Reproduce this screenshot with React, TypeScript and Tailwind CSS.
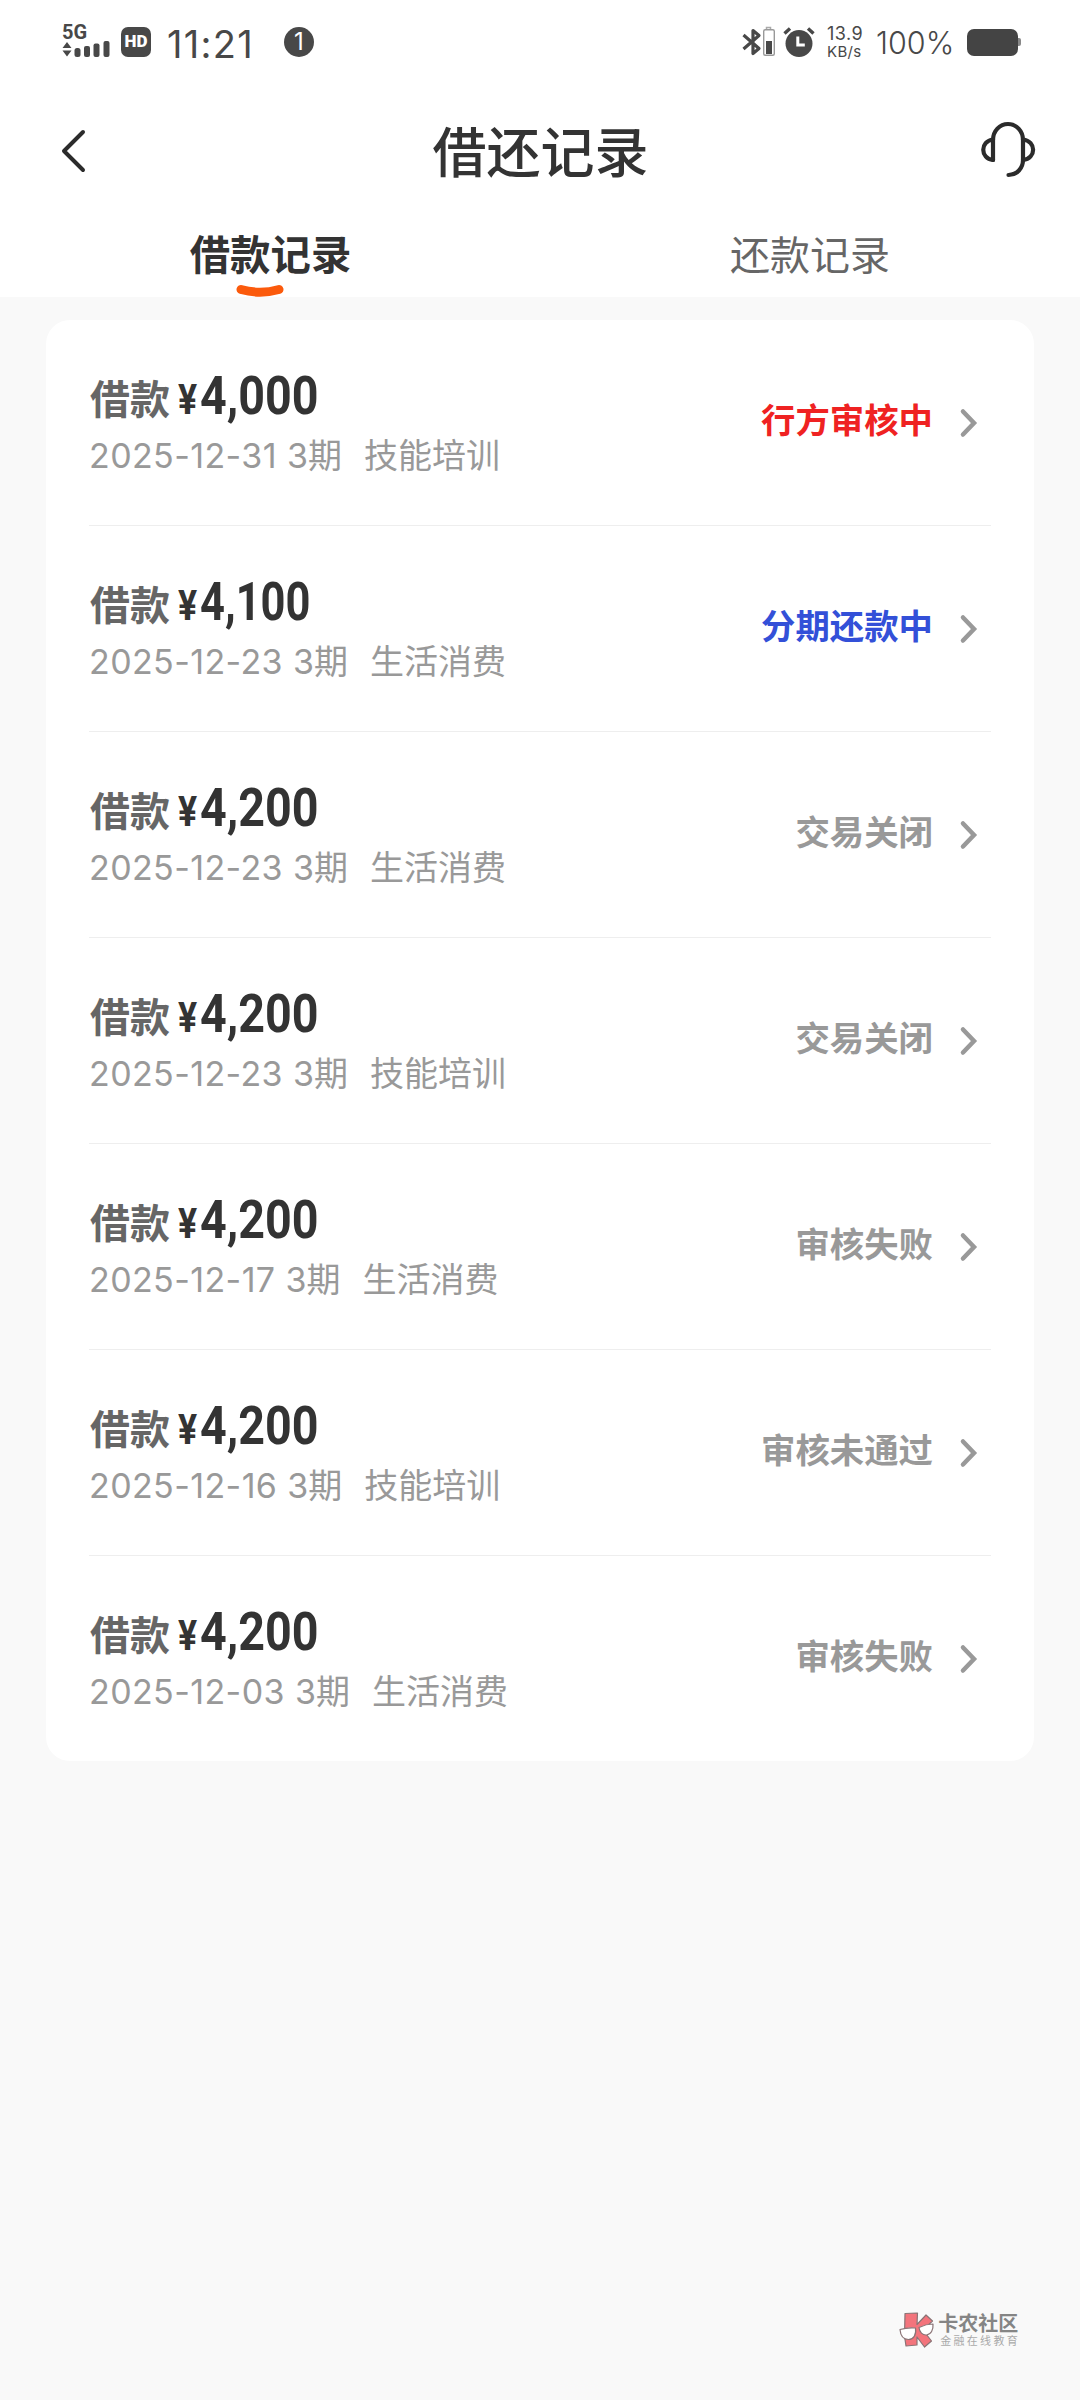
import { clsx } from "clsx";

type LoanRecord = {
  amount: string;
  date: string;
  usage: string;
  status: string;
  color: string;
};

const records: LoanRecord[] = [
  { amount: "4,000", date: "2025-12-31", usage: "技能培训", status: "行方审核中", color: "text-[#ef2222]" },
  { amount: "4,100", date: "2025-12-23", usage: "生活消费", status: "分期还款中", color: "text-[#3350d8]" },
  { amount: "4,200", date: "2025-12-23", usage: "生活消费", status: "交易关闭", color: "text-[#999999]" },
  { amount: "4,200", date: "2025-12-23", usage: "技能培训", status: "交易关闭", color: "text-[#999999]" },
  { amount: "4,200", date: "2025-12-17", usage: "生活消费", status: "审核失败", color: "text-[#999999]" },
  { amount: "4,200", date: "2025-12-16", usage: "技能培训", status: "审核未通过", color: "text-[#999999]" },
  { amount: "4,200", date: "2025-12-03", usage: "生活消费", status: "审核失败", color: "text-[#999999]" },
];

function SignalIcon() {
  return (
    <svg className="block" width="48" height="18" viewBox="0 0 48 18" fill="#484848">
      <path d="M0.5 7 5 1l4.500 6zM0.500 9.500h9L5 15.500z" />
      <rect x="12.500" y="7" width="6" height="9" rx="2.500" />
      <rect x="22" y="5" width="6" height="11" rx="2" />
      <rect x="31.500" y="2.500" width="6" height="13.500" rx="2" />
      <rect x="41.500" y="0" width="6" height="16" rx="2" />
    </svg>
  );
}

function BluetoothIcon() {
  return (
    <svg className="block" width="34" height="32" viewBox="0 0 34 32" fill="none">
      <path d="M1.500 9 17 22.500 11 27.500V4.500L17 9.500 1.500 23" stroke="#484848" strokeWidth="3.200" strokeLinejoin="round" />
      <path d="M24.500 3.500v-2h4v2" stroke="#aaa" strokeWidth="1.500" />
      <rect x="21.700" y="3.700" width="10.600" height="25.600" rx="1.500" stroke="#999" strokeWidth="1.400" />
      <rect x="24" y="15" width="6" height="13" fill="#484848" />
    </svg>
  );
}

function AlarmIcon() {
  return (
    <svg className="block" width="32" height="32" viewBox="0 0 32 32" fill="none">
      <circle cx="16" cy="17.500" r="13.500" fill="#484848" />
      <path d="M1.500 7.500 7 2.500M30.500 7.500 25 2.500" stroke="#484848" strokeWidth="3.400" />
      <path d="M14.800 10.500V19h7" stroke="#fff" strokeWidth="3" />
    </svg>
  );
}

function StatusBar() {
  return (
    <div className="flex h-[84px] items-center justify-between pr-[59px] pl-[62px] text-[#484848]">
      <div className="flex items-center">
        <div className="flex w-[48px] flex-col">
          <span className="h-[16px] font-['Roboto',sans-serif] text-[20px] leading-[14px] font-bold">5G</span>
          <SignalIcon />
        </div>
        <span className="ml-[11px] flex h-[30px] w-[30px] items-center justify-center rounded-[7px] bg-[#484848] font-['Roboto',sans-serif] text-[17px] font-black text-white">
          HD
        </span>
        <span className="mt-[3px] ml-[16px] w-[86px] font-['Inter',sans-serif] text-[38px] leading-none tracking-[1.300px] whitespace-nowrap">
          11:21
        </span>
        <span className="ml-[31px] flex h-[30px] w-[30px] items-center justify-center rounded-full bg-[#484848] font-['Inter',sans-serif] text-[24px] leading-none text-white">
          1
        </span>
      </div>
      <div className="flex items-center">
        <BluetoothIcon />
        <span className="ml-[7px]">
          <AlarmIcon />
        </span>
        <div className="mt-[2px] ml-[12px] flex w-[38px] flex-col font-['Inter',sans-serif] whitespace-nowrap">
          <span className="text-[18px] leading-[18px] tracking-[0.5px]">13.9</span>
          <span className="text-[15px] leading-[18px] tracking-[0.3px]">KB/s</span>
        </div>
        <span className="mt-[2px] ml-[11px] w-[79px] font-['Inter',sans-serif] text-[30.500px] leading-none font-light whitespace-nowrap">
          100%
        </span>
        <span className="ml-[12px] h-[27px] w-[51px] rounded-[7px] bg-[#444]" />
        <span className="h-[8px] w-[3px] rounded-r-[2px] bg-[#888]" />
      </div>
    </div>
  );
}

function NavBar() {
  return (
    <div className="flex h-[134px] items-center justify-between pr-[43px] pl-[60px]">
      <svg className="block" width="42" height="46" viewBox="0 0 42 46" fill="none" stroke="#2b2b2b" strokeWidth="4" strokeLinecap="round" strokeLinejoin="round">
        <path d="M23 4 4 23 23 42" />
      </svg>
      <h1 className="mt-[5px] text-[54px] leading-none font-medium text-[#333]">借还记录</h1>
      <svg className="mt-[-2px] block" width="58" height="58" viewBox="0 0 58 58" fill="none" stroke="#2b2b2b" strokeWidth="4.200" strokeLinecap="round" strokeLinejoin="round">
        <path d="M14 39V19a15 16 0 0 1 30 0v20c0 8-6 15-14.500 15" />
        <path d="M14 18.500C1 20 1 37.500 14 39M44 18.500c13.500 1.500 13.500 19 0 20.500" />
      </svg>
    </div>
  );
}

function Tabs() {
  return (
    <div className="flex h-[79px] text-[40px]">
      <div className="flex w-1/2 flex-col items-center pt-[16px]">
        <span className="pl-px text-[40.400px] leading-[44px] font-bold text-[#333]">借款记录</span>
        <svg className="mt-[6px] mr-[20px] block" width="48" height="13" viewBox="0 0 48 13" fill="none">
          <path d="M5 5.500c12 3.400 26 3.400 38 0" stroke="#fb5a0c" strokeWidth="9" strokeLinecap="round" />
        </svg>
      </div>
      <div className="flex w-1/2 flex-col items-center pt-[16px]">
        <span className="leading-[44px] text-[#666]">还款记录</span>
      </div>
    </div>
  );
}

function RecordRow({ record, last }: { record: LoanRecord; last: boolean }) {
  return (
    <li className={clsx("flex justify-between", last ? "h-[205px]" : "h-[206px] border-b border-[#eeeeee]")}>
      <div className="pt-[50px]">
        <div className="flex h-[53px] items-baseline whitespace-nowrap">
          <span className="w-[89px] pl-px text-[40px] leading-[52px] font-bold text-[#666]">借款</span>
          <span className="w-[22px] font-['Roboto',sans-serif] text-[42px] leading-[52px] font-bold text-[#333]">
            <span className="inline-block origin-left scale-x-85">¥</span>
          </span>
          <span
            className={clsx(
              "inline-block origin-left font-['Roboto',sans-serif] text-[53px] leading-[52px] font-bold text-[#333]",
              record.amount.includes("1") ? "scale-x-82" : "scale-x-88"
            )}
          >
            {record.amount}
          </span>
        </div>
        <div className="flex items-baseline text-[34px] leading-[65px] whitespace-nowrap text-[#999]">
          <span className="tracking-[0.4px]">{record.date}</span>
          <span className="ml-[10px]">3期</span>
          <span className="ml-[22px]">{record.usage}</span>
        </div>
      </div>
      <div className="flex h-[200px] items-center pr-[12px]">
        <span className={clsx("mt-[3px] text-[34.400px] leading-none font-bold", record.color)}>{record.status}</span>
        <svg className="mt-[6px] ml-[26px] block" width="20" height="30" viewBox="0 0 20 30" fill="none">
          <path d="M4 3.500 15 15 4 26.500" stroke="#999" strokeWidth="4.500" strokeLinecap="round" />
        </svg>
      </div>
    </li>
  );
}

function Watermark() {
  return (
    <div className="mt-auto mr-[60px] mb-[51px] flex items-center gap-[4px] self-end">
      <svg className="block overflow-visible" width="34" height="37" viewBox="0 0 34 37" fill="none" stroke="#8a7476" strokeWidth="1.200" strokeLinejoin="round">
        <path d="M5 1.500 17.500 1 17 12.500 26 3l6.500 6-9.500 9 8.500 11-7 6-7.500-10v8L6 34 4.500 24z" fill="#f3747c" />
        <path d="M0 17.500c5-1.500 10-2 15.500-1.500 1 7-2 11.500-7 11.500S.5 23.500 0 17.500zM19 15.500c4-2 9-3.500 14-3.500.5 6-2 10.500-6.500 11-4 .3-7-3-7.500-7.500z" fill="#fff" />
      </svg>
      <div className="flex flex-col whitespace-nowrap">
        <span className="text-[20px] leading-[21px] font-bold text-[#858585]">卡农社区</span>
        <span className="pl-[2px] text-[11px] leading-[13px] tracking-[2.300px] text-[#aaa]">金融在线教育</span>
      </div>
    </div>
  );
}

export default function App() {
  return (
    <div className="flex h-[2400px] w-[1080px] flex-col bg-[#f9f9f9] font-['Inter','Noto_Sans_CJK_SC',sans-serif]">
      <header className="bg-white">
        <StatusBar />
        <NavBar />
        <Tabs />
      </header>
      <ul className="mx-[46px] mt-[23px] rounded-[24px] bg-white pr-[43px] pl-[43px]">
        {records.map((record, index) => (
          <RecordRow key={index} record={record} last={index === records.length - 1} />
        ))}
      </ul>
      <Watermark />
    </div>
  );
}
